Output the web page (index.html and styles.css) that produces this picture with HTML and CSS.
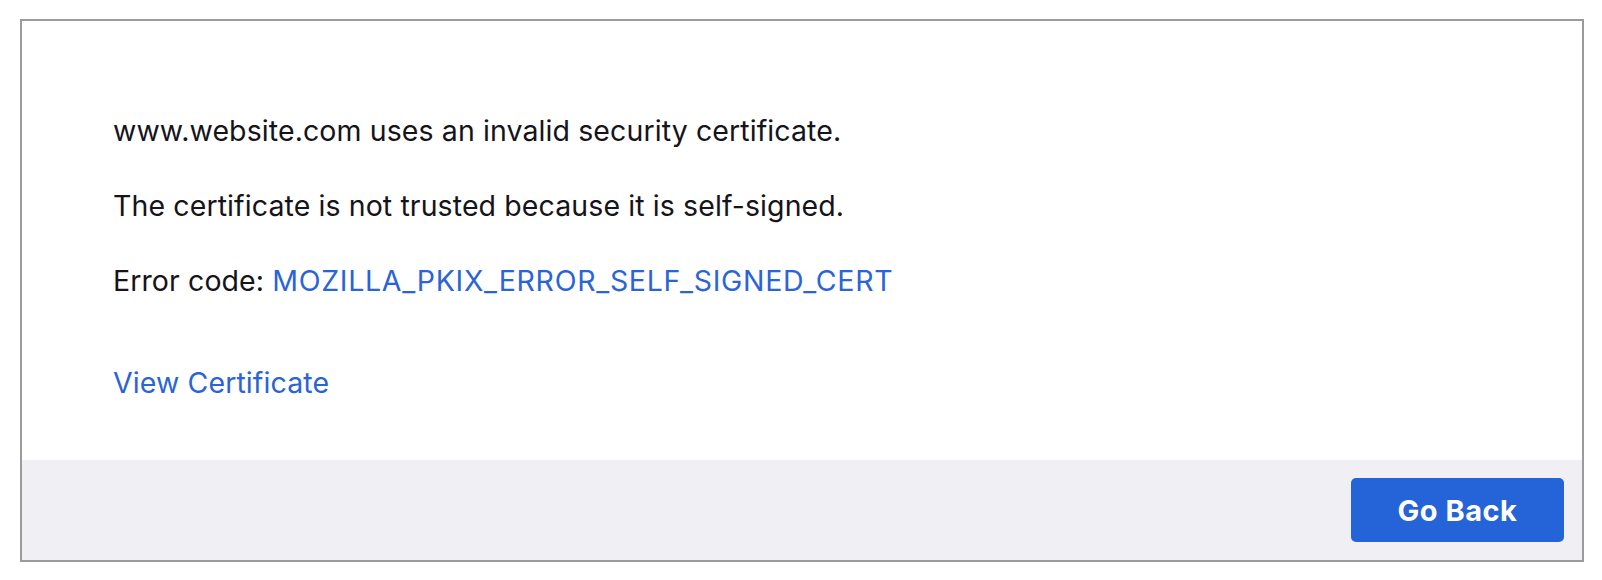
FILE: index.html
```html
<!DOCTYPE html>
<html>
<head>
<meta charset="utf-8">
<link rel="stylesheet" href="styles.css">
</head>
<body>
<div class="dialog">
  <div class="content">
    <p class="line">www.website.com uses an invalid security certificate.</p>
    <p class="line">The certificate is not trusted because it is self-signed.</p>
    <p class="line">Error code: <a class="link code" href="#">MOZILLA_PKIX_ERROR_SELF_SIGNED_CERT</a></p>
    <p class="line view"><a class="link" href="#">View Certificate</a></p>
  </div>
  <div class="footer">
    <button class="btn">Go Back</button>
  </div>
</div>
</body>
</html>
```
FILE: styles.css
```css
html, body {
  margin: 0;
  padding: 0;
  background: #ffffff;
}
body {
  font-family: Inter, "Liberation Sans", Arial, sans-serif;
  color: #15141a;
}
.dialog {
  margin: 19px 0 0 20px;
  width: 1560px;
  height: 539px;
  border: 2px solid #9b9b9b;
  display: flex;
  flex-direction: column;
}
.content {
  flex: 1;
  padding: 92px 0 0 91px;
  background: #ffffff;
}
.line {
  margin: 0 0 39px 0;
  font-size: 28.5px;
  letter-spacing: 0.1px;
  line-height: 36px;
}
.line.view {
  margin-top: 66px;
  margin-bottom: 0;
}
.link {
  color: #2a64d6;
  text-decoration: none;
}
.link.code {
  letter-spacing: 0.7px;
}
.footer {
  height: 100px;
  box-sizing: border-box;
  background: #f0f0f4;
  display: flex;
  justify-content: flex-end;
  align-items: center;
  padding: 0 18px;
}
.btn {
  width: 213px;
  height: 64px;
  border: none;
  border-radius: 5px;
  background: #2563d9;
  color: #ffffff;
  font-family: Inter, "Liberation Sans", Arial, sans-serif;
  font-weight: bold;
  font-size: 29px;
  letter-spacing: 0.5px;
}
```
